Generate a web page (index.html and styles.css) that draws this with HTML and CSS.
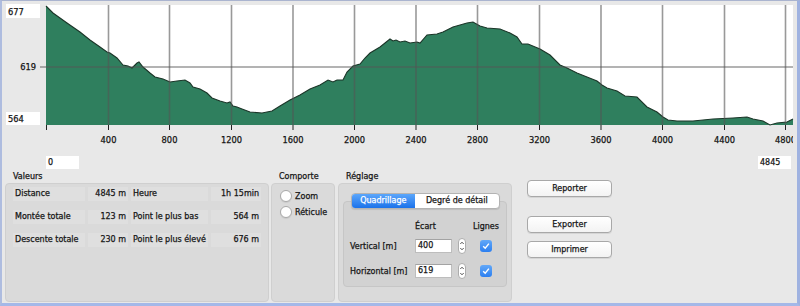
FILE: index.html
```html
<!DOCTYPE html>
<html lang="fr">
<head>
    <meta charset="UTF-8">
    <title>Profil d'altitude</title>
    <link rel="stylesheet" href="styles.css">
</head>
<body>
    <div class="window">
        <!-- elevation chart, drawn in page coordinates -->
        <svg class="chart" width="795" height="149" viewBox="2 1 795 149">
            <defs>
                <clipPath id="plotClip"><rect x="0" y="0" width="793" height="150"/></clipPath>
            </defs>
            <rect class="ylabel-box" x="6" y="4" width="34" height="14"/>
            <text class="ylabel" x="8" y="14.5">677</text>
            <text class="ylabel" x="36" y="70" text-anchor="end">619</text>
            <rect class="ylabel-box" x="6" y="112" width="34" height="13"/>
            <text class="ylabel" x="8" y="121.5">564</text>

            <rect class="plot-bg" x="46" y="5" width="747" height="120"/>
            <path class="profile-fill" d="M46,125 L46,6 53,13 67,23 80,32 90,40 100,47 107,52 110,53 117,58 123,65 128,66 132,68 137,63 139,62 143,67 150,73 155,77 163,79 170,82 177,81 185,80 190,83 193,87 200,89 207,93 212,98 220,101 227,103 230,102 233,106 237,107 242,109 250,112 262,113 272,111 280,106 290,100 300,95 310,89 320,85 328,80 333,82 337,80 343,80 347,72 353,66 360,64 365,58 370,53 380,47 390,39 393,41 396,40 400,42 405,41 410,43 417,42 420,43 427,35 437,34 443,32 453,27 467,23 473,22 480,26 487,28 500,29 510,33 517,37 522,44 528,44 540,49 550,55 560,65 567,68 577,73 587,77 597,81 602,85 607,88 617,91 625,96 637,97 647,107 657,112 663,117 668,120 677,121 693,121 713,119 733,118 747,117 753,119 763,121 770,125 777,123 787,122 793,119 L793,125 Z"/>
            <polyline class="profile-line" points="46,6 53,13 67,23 80,32 90,40 100,47 107,52 110,53 117,58 123,65 128,66 132,68 137,63 139,62 143,67 150,73 155,77 163,79 170,82 177,81 185,80 190,83 193,87 200,89 207,93 212,98 220,101 227,103 230,102 233,106 237,107 242,109 250,112 262,113 272,111 280,106 290,100 300,95 310,89 320,85 328,80 333,82 337,80 343,80 347,72 353,66 360,64 365,58 370,53 380,47 390,39 393,41 396,40 400,42 405,41 410,43 417,42 420,43 427,35 437,34 443,32 453,27 467,23 473,22 480,26 487,28 500,29 510,33 517,37 522,44 528,44 540,49 550,55 560,65 567,68 577,73 587,77 597,81 602,85 607,88 617,91 625,96 637,97 647,107 657,112 663,117 668,120 677,121 693,121 713,119 733,118 747,117 753,119 763,121 770,125 777,123 787,122 793,119"/>

            <g class="grid">
                <line x1="40" y1="67" x2="793" y2="67"/>
                <line x1="108.5" y1="5" x2="108.5" y2="125"/>
                <line x1="169.5" y1="5" x2="169.5" y2="125"/>
                <line x1="231.5" y1="5" x2="231.5" y2="125"/>
                <line x1="293" y1="5" x2="293" y2="125"/>
                <line x1="354.5" y1="5" x2="354.5" y2="125"/>
                <line x1="416" y1="5" x2="416" y2="125"/>
                <line x1="477.5" y1="5" x2="477.5" y2="125"/>
                <line x1="539.5" y1="5" x2="539.5" y2="125"/>
                <line x1="601" y1="5" x2="601" y2="125"/>
                <line x1="662.5" y1="5" x2="662.5" y2="125"/>
                <line x1="724.5" y1="5" x2="724.5" y2="125"/>
                <line x1="785.5" y1="5" x2="785.5" y2="125"/>
            </g>
            <g class="ticks">
                <line x1="46.5" y1="125" x2="46.5" y2="130"/>
                <line x1="108.5" y1="125" x2="108.5" y2="130"/>
                <line x1="169.5" y1="125" x2="169.5" y2="130"/>
                <line x1="231.5" y1="125" x2="231.5" y2="130"/>
                <line x1="293" y1="125" x2="293" y2="130"/>
                <line x1="354.5" y1="125" x2="354.5" y2="130"/>
                <line x1="416" y1="125" x2="416" y2="130"/>
                <line x1="477.5" y1="125" x2="477.5" y2="130"/>
                <line x1="539.5" y1="125" x2="539.5" y2="130"/>
                <line x1="601" y1="125" x2="601" y2="130"/>
                <line x1="662.5" y1="125" x2="662.5" y2="130"/>
                <line x1="724.5" y1="125" x2="724.5" y2="130"/>
                <line x1="785.5" y1="125" x2="785.5" y2="130"/>
            </g>
            <g class="xlabels" clip-path="url(#plotClip)">
                <text x="108.5" y="143">400</text>
                <text x="169.5" y="143">800</text>
                <text x="231.5" y="143">1200</text>
                <text x="293" y="143">1600</text>
                <text x="354.5" y="143">2000</text>
                <text x="416" y="143">2400</text>
                <text x="477.5" y="143">2800</text>
                <text x="539.5" y="143">3200</text>
                <text x="601" y="143">3600</text>
                <text x="662.5" y="143">4000</text>
                <text x="724.5" y="143">4400</text>
                <text x="785.5" y="143">4800</text>
            </g>
        </svg>

        <div class="range">
            <span class="range-box">0</span>
            <span class="range-box">4845</span>
        </div>

        <div class="panel">
            <div class="group group-values">
                <div class="group-title">Valeurs</div>
                <div class="group-box values">
                    <span class="cell">Distance</span>
                    <span class="cell num">4845 m</span>
                    <span class="cell">Heure</span>
                    <span class="cell num">1h 15min</span>
                    <span class="cell">Montée totale</span>
                    <span class="cell num">123 m</span>
                    <span class="cell">Point le plus bas</span>
                    <span class="cell num">564 m</span>
                    <span class="cell">Descente totale</span>
                    <span class="cell num">230 m</span>
                    <span class="cell">Point le plus élevé</span>
                    <span class="cell num">676 m</span>
                </div>
            </div>

            <div class="group group-mode">
                <div class="group-title">Comporte</div>
                <div class="group-box modes">
                    <label class="radio"><span class="radio-dot"></span>Zoom</label>
                    <label class="radio"><span class="radio-dot"></span>Réticule</label>
                </div>
            </div>

            <div class="group group-settings">
                <div class="group-title">Réglage</div>
                <div class="group-box settings">
                    <div class="tabs">
                        <span class="tab tab-active">Quadrillage</span>
                        <span class="tab">Degré de détail</span>
                    </div>
                    <div class="pane">
                        <div class="pane-row pane-head">
                            <span></span>
                            <span>Écart</span>
                            <span></span>
                            <span class="center">Lignes</span>
                        </div>
                        <div class="pane-row">
                            <span>Vertical [m]</span>
                            <span class="field">400</span>
                            <svg class="stepper" width="8" height="16" viewBox="0 0 8 16"><rect x="0.5" y="0.5" width="7" height="15" rx="3.5" fill="#fff" stroke="#adadad"/><path d="M2.3 6 L4 4.2 L5.7 6 M2.3 10 L4 11.8 L5.7 10" fill="none" stroke="#444" stroke-width="0.9"/></svg>
                            <span class="center"><span class="checkbox"><svg width="12" height="12" viewBox="0 0 12 12"><path d="M3.2 6.3 L5.2 8.3 L8.9 3.6" fill="none" stroke="#fff" stroke-width="1.4"/></svg></span></span>
                        </div>
                        <div class="pane-row">
                            <span>Horizontal [m]</span>
                            <span class="field">619</span>
                            <svg class="stepper" width="8" height="16" viewBox="0 0 8 16"><rect x="0.5" y="0.5" width="7" height="15" rx="3.5" fill="#fff" stroke="#adadad"/><path d="M2.3 6 L4 4.2 L5.7 6 M2.3 10 L4 11.8 L5.7 10" fill="none" stroke="#444" stroke-width="0.9"/></svg>
                            <span class="center"><span class="checkbox"><svg width="12" height="12" viewBox="0 0 12 12"><path d="M3.2 6.3 L5.2 8.3 L8.9 3.6" fill="none" stroke="#fff" stroke-width="1.4"/></svg></span></span>
                        </div>
                    </div>
                </div>
            </div>

            <div class="actions">
                <button class="btn btn-report">Reporter</button>
                <button class="btn btn-export">Exporter</button>
                <button class="btn btn-print">Imprimer</button>
            </div>
        </div>
    </div>
</body>
</html>
```

FILE: styles.css
```css
* {
    margin: 0;
    padding: 0;
    box-sizing: border-box;
}

body {
    font-family: 'DejaVu Sans', Verdana, sans-serif;
    font-size: 8px;
    color: #161616;
    background: #e8e8e8;
    -webkit-text-stroke: 0.25px #161616;
}

.window {
    width: 800px;
    height: 306px;
    background: #e8e8e8;
    border-top: 1px solid #aab4cf;
    border-left: 2px solid #aebcdf;
    border-right: 3px solid #9fb2e0;
    border-bottom: 3px solid #a4b8e8;
    display: flex;
    flex-direction: column;
}

/* chart */

.chart {
    display: block;
}

.chart text {
    font-family: 'DejaVu Sans', Verdana, sans-serif;
    fill: #141414;
    stroke: #141414;
    stroke-width: 0.25px;
}

.ylabel {
    font-size: 8.3px;
}

.ylabel-box {
    fill: #fff;
}

.plot-bg {
    fill: #fff;
}

.profile-fill {
    fill: #2f7f5e;
}

.profile-line {
    fill: none;
    stroke: #1b3528;
    stroke-width: 1.1;
}

.grid line {
    stroke: #555;
    stroke-opacity: 0.6;
    stroke-width: 1.6;
}

.ticks line {
    stroke: #222;
    stroke-width: 1;
}

.xlabels text {
    font-size: 8.3px;
    text-anchor: middle;
}

/* range boxes under the chart */

.range {
    display: flex;
    justify-content: space-between;
    padding: 0 6px 0 44px;
    margin-top: 6px;
}

.range-box {
    width: 33px;
    height: 13px;
    line-height: 13px;
    padding-left: 2px;
    background: #fff;
}

/* bottom panel */

.panel {
    display: flex;
    padding-left: 3px;
    margin-top: 1px;
}

.group-title {
    height: 13px;
    line-height: 13px;
    padding-left: 8px;
}

.group-box {
    height: 119px;
    background: #dadada;
    border: 1px solid #cfcfcf;
    border-radius: 4px;
}

.group-values {
    width: 264px;
}

.group-mode {
    width: 64px;
    margin-left: 2px;
}

.group-settings {
    width: 174px;
    margin-left: 3px;
}

.values {
    display: grid;
    grid-template-columns: 72px 40px 77px 50px;
    grid-auto-rows: 14px;
    column-gap: 3px;
    row-gap: 9px;
    padding: 3px 0 0 7px;
    align-content: start;
}

.cell {
    line-height: 14px;
    padding-left: 2px;
    background: #dfdfdf;
    white-space: nowrap;
}

.num {
    text-align: right;
    padding: 0 2px 0 0;
}

.modes {
    display: flex;
    flex-direction: column;
    gap: 4px;
    padding: 6px 0 0 8px;
}

.radio {
    display: flex;
    align-items: center;
    gap: 3px;
    height: 12px;
}

.radio-dot {
    width: 12px;
    height: 12px;
    border-radius: 50%;
    background: #fff;
    border: 1px solid #a9a9a9;
    box-shadow: 0 1px 1px rgba(0, 0, 0, 0.08);
}

.settings {
    padding: 9px 4px 0;
}

.tabs {
    position: relative;
    display: flex;
    width: 149px;
    height: 16px;
    margin: 0 auto -8px;
    background: #fff;
    border: 1px solid #b3b3b3;
    border-radius: 4px;
    overflow: hidden;
    box-shadow: 0 1px 1px rgba(0, 0, 0, 0.1);
}

.tab {
    line-height: 14px;
    text-align: center;
    width: 84px;
}

.tab-active {
    width: 64px;
    color: #fff;
    -webkit-text-stroke: 0.25px #fff;
    background: linear-gradient(#5ba6fb, #1b72ea);
}

.pane {
    height: 86px;
    background: #d2d2d2;
    border: 1px solid #c6c6c6;
    border-radius: 4px;
    padding: 18px 0 0 6px;
}

.pane-row {
    display: grid;
    grid-template-columns: 65px 37px 14px 40px;
    align-items: center;
    height: 14px;
    margin-bottom: 11px;
}

.pane-head {
    height: 12px;
    margin-bottom: 6px;
}

.center {
    display: flex;
    justify-content: center;
}

.field {
    height: 14px;
    line-height: 12px;
    padding-left: 2px;
    background: #fff;
    border: 1px solid #bdbdbd;
    border-top-color: #a3a3a3;
}

.stepper {
    justify-self: end;
}

.checkbox {
    display: block;
    width: 12px;
    height: 12px;
    border-radius: 3px;
    background: linear-gradient(#62a8f8, #2c7ff0);
}

.checkbox svg {
    display: block;
}

/* buttons */

.actions {
    display: flex;
    flex-direction: column;
    margin-left: 15px;
}

.btn {
    width: 85px;
    height: 17px;
    font-family: 'DejaVu Sans', Verdana, sans-serif;
    font-size: 8px;
    color: #161616;
    -webkit-text-stroke: 0.25px #161616;
    background: linear-gradient(#ffffff, #f3f3f3);
    border: 1px solid #a8a8a8;
    border-radius: 4px;
    box-shadow: 0 1px 0 rgba(0, 0, 0, 0.08);
}

.btn-report {
    margin-top: 10px;
}

.btn-export {
    margin-top: 19px;
}

.btn-print {
    margin-top: 8px;
}
```
